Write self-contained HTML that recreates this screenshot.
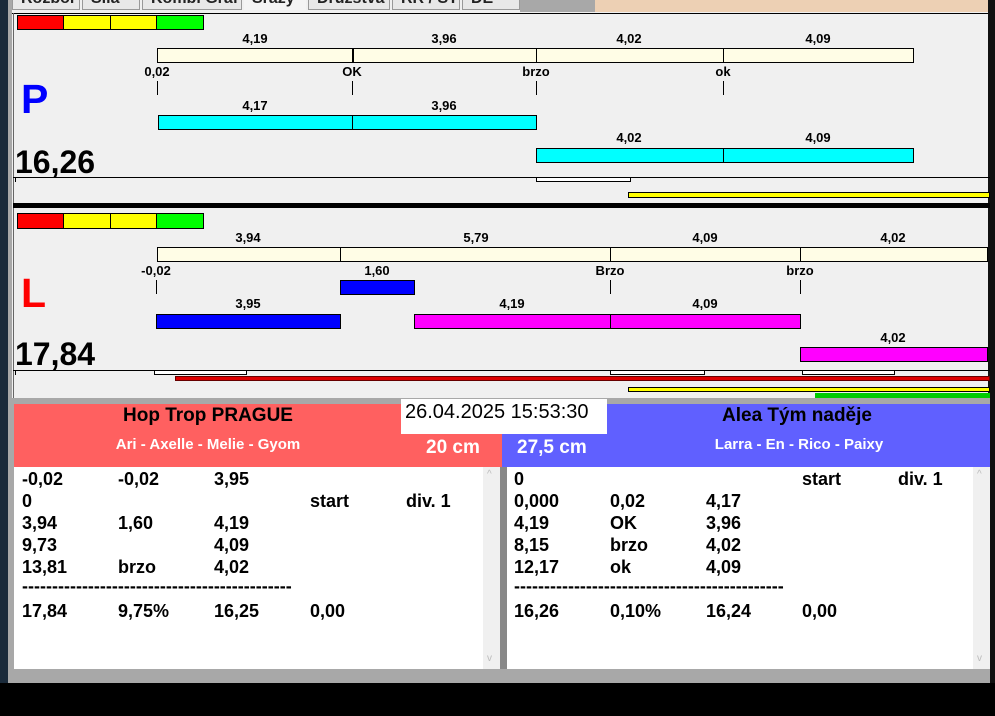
<!DOCTYPE html>
<html><head><meta charset="utf-8"><style>
*{margin:0;padding:0;box-sizing:border-box}
body{width:995px;height:716px;overflow:hidden;background:#000;position:relative;font-family:"Liberation Sans",Arial,sans-serif;font-weight:bold}
div,span{position:absolute}
.lb{font-size:13px;transform:translateX(-50%);white-space:nowrap;color:#000}
.cr{background:#fffde6;border:1px solid #000}
.tk{width:1px;background:#000}
.tab{top:-2px;height:12px;background:#e8e8e8;border:1px solid #999;border-top:none;font-size:16px;overflow:hidden}
.tab span{top:-8px;left:8px;white-space:nowrap;font-weight:bold;color:#222}
.row{font-size:18px;white-space:nowrap}
</style></head><body>
<div style="left:0;top:0;width:8px;height:683px;background:#1a2a3a"></div>
<div style="left:8px;top:0;width:4px;height:683px;background:#a8a8a8"></div>
<div style="left:12px;top:0;width:978px;height:13px;background:#f0f0f0"></div>
<div style="left:520px;top:0;width:75px;height:12px;background:#a8a8a8"></div>
<div style="left:595px;top:0;width:395px;height:12px;background:#edd0b4"></div>
<div class="tab" style="left:12px;width:68px"><span>Rozbor</span></div>
<div class="tab" style="left:82px;width:58px"><span>Síla</span></div>
<div class="tab" style="left:142px;width:100px"><span>Kombi Graf</span></div>
<div class="tab" style="left:244px;width:62px;background:#f4f4f4;border:none"><span>Sráży</span></div>
<div class="tab" style="left:308px;width:82px"><span>Družstva</span></div>
<div class="tab" style="left:392px;width:68px"><span>RR / ST</span></div>
<div class="tab" style="left:462px;width:58px"><span>DE</span></div>
<div style="left:12px;top:13px;width:978px;height:390px;background:#f0f0f0;border-top:1px solid #000"></div>
<div style="left:988px;top:0;width:7px;height:683px;background:#111"></div>
<div style="left:13px;top:13px;width:1px;height:390px;background:#666"></div>

<div style="left:17px;top:15px;width:47px;height:15px;background:#f00;border:1px solid #000"></div>
<div style="left:63px;top:15px;width:48px;height:15px;background:#ff0;border:1px solid #000"></div>
<div style="left:110px;top:15px;width:47px;height:15px;background:#ff0;border:1px solid #000"></div>
<div style="left:156px;top:15px;width:48px;height:15px;background:#0f0;border:1px solid #000"></div>

<span class="lb" style="left:255px;top:31px">4,19</span>
<span class="lb" style="left:444px;top:31px">3,96</span>
<span class="lb" style="left:629px;top:31px">4,02</span>
<span class="lb" style="left:818px;top:31px">4,09</span>
<div class="cr" style="left:157px;top:48px;width:757px;height:15px"></div>
<div class="tk" style="left:352px;top:48px;height:15px;width:2px"></div>
<div class="tk" style="left:536px;top:48px;height:15px"></div>
<div class="tk" style="left:723px;top:48px;height:15px"></div>
<span class="lb" style="left:157px;top:64px">0,02</span>
<span class="lb" style="left:352px;top:64px">OK</span>
<span class="lb" style="left:536px;top:64px">brzo</span>
<span class="lb" style="left:723px;top:64px">ok</span>
<div class="tk" style="left:157px;top:81px;height:14px"></div>
<div class="tk" style="left:352px;top:81px;height:14px"></div>
<div class="tk" style="left:536px;top:81px;height:14px"></div>
<div class="tk" style="left:723px;top:81px;height:14px"></div>
<span style="left:21px;top:76px;font-size:41px;color:#00f">P</span>

<span class="lb" style="left:255px;top:98px">4,17</span>
<span class="lb" style="left:444px;top:98px">3,96</span>
<div style="left:158px;top:115px;width:195px;height:15px;background:#0ff;border:1px solid #000"></div>
<div style="left:352px;top:115px;width:185px;height:15px;background:#0ff;border:1px solid #000"></div>
<span class="lb" style="left:629px;top:130px">4,02</span>
<span class="lb" style="left:818px;top:130px">4,09</span>
<div style="left:536px;top:148px;width:188px;height:15px;background:#0ff;border:1px solid #000"></div>
<div style="left:723px;top:148px;width:191px;height:15px;background:#0ff;border:1px solid #000"></div>
<span style="left:15px;top:144px;font-size:32px">16,26</span>
<div style="left:13px;top:177px;width:977px;height:1px;background:#000"></div>
<div class="tk" style="left:15px;top:177px;height:5px"></div>
<div style="left:536px;top:177px;width:95px;height:5px;background:#fff;border:1px solid #000"></div>
<div style="left:628px;top:192px;width:362px;height:6px;background:#ff0;border:1px solid #000"></div>
<div style="left:13px;top:203px;width:977px;height:5px;background:#000"></div>

<div style="left:17px;top:213px;width:47px;height:16px;background:#f00;border:1px solid #000"></div>
<div style="left:63px;top:213px;width:48px;height:16px;background:#ff0;border:1px solid #000"></div>
<div style="left:110px;top:213px;width:47px;height:16px;background:#ff0;border:1px solid #000"></div>
<div style="left:156px;top:213px;width:48px;height:16px;background:#0f0;border:1px solid #000"></div>

<span class="lb" style="left:248px;top:230px">3,94</span>
<span class="lb" style="left:476px;top:230px">5,79</span>
<span class="lb" style="left:705px;top:230px">4,09</span>
<span class="lb" style="left:893px;top:230px">4,02</span>
<div class="cr" style="left:157px;top:247px;width:831px;height:15px"></div>
<div class="tk" style="left:340px;top:247px;height:15px"></div>
<div class="tk" style="left:610px;top:247px;height:15px"></div>
<div class="tk" style="left:800px;top:247px;height:15px"></div>
<span class="lb" style="left:156px;top:263px">-0,02</span>
<span class="lb" style="left:377px;top:263px">1,60</span>
<span class="lb" style="left:610px;top:263px">Brzo</span>
<span class="lb" style="left:800px;top:263px">brzo</span>
<div class="tk" style="left:156px;top:280px;height:14px"></div>
<div class="tk" style="left:610px;top:280px;height:14px"></div>
<div class="tk" style="left:800px;top:280px;height:14px"></div>
<div style="left:340px;top:280px;width:75px;height:15px;background:#00f;border:1px solid #000"></div>
<span style="left:21px;top:270px;font-size:41px;color:#f00">L</span>

<span class="lb" style="left:248px;top:296px">3,95</span>
<span class="lb" style="left:512px;top:296px">4,19</span>
<span class="lb" style="left:705px;top:296px">4,09</span>
<div style="left:156px;top:314px;width:185px;height:15px;background:#00f;border:1px solid #000"></div>
<div style="left:414px;top:314px;width:197px;height:15px;background:#f0f;border:1px solid #000"></div>
<div style="left:610px;top:314px;width:191px;height:15px;background:#f0f;border:1px solid #000"></div>
<span class="lb" style="left:893px;top:330px">4,02</span>
<div style="left:800px;top:347px;width:188px;height:15px;background:#f0f;border:1px solid #000"></div>
<span style="left:15px;top:336px;font-size:32px">17,84</span>
<div style="left:13px;top:370px;width:977px;height:1px;background:#000"></div>
<div class="tk" style="left:15px;top:370px;height:5px"></div>
<div style="left:154px;top:370px;width:93px;height:5px;background:#fff;border:1px solid #000"></div>
<div style="left:610px;top:370px;width:95px;height:5px;background:#fff;border:1px solid #000"></div>
<div style="left:802px;top:370px;width:93px;height:5px;background:#fff;border:1px solid #000"></div>
<div style="left:175px;top:376px;width:815px;height:5px;background:#d00;border:1px solid #600"></div>
<div style="left:628px;top:387px;width:362px;height:5px;background:#ff0;border:1px solid #000"></div>
<div style="left:815px;top:393px;width:175px;height:5px;background:#0c0"></div>

<div style="left:12px;top:398px;width:978px;height:285px;background:#a8a8a8"></div>
<div style="left:14px;top:404px;width:488px;height:63px;background:#ff6060"></div>
<div style="left:502px;top:404px;width:488px;height:63px;background:#6060ff"></div>
<div style="left:401px;top:399px;width:206px;height:35px;background:#fff"></div>
<span style="left:405px;top:401px;font-size:20px;font-weight:normal">26.04.2025 15:53:30</span>
<span style="left:208px;top:405px;font-size:19px;transform:translateX(-50%);white-space:nowrap">Hop Trop PRAGUE</span>
<span style="left:208px;top:436px;font-size:15px;color:#fff;transform:translateX(-50%);white-space:nowrap">Ari - Axelle - Melie - Gyom</span>
<span style="left:426px;top:437px;font-size:19px;color:#fff">20 cm</span>
<span style="left:797px;top:405px;font-size:19px;transform:translateX(-50%);white-space:nowrap">Alea Tým naděje</span>
<span style="left:799px;top:436px;font-size:15px;color:#fff;transform:translateX(-50%);white-space:nowrap">Larra - En - Rico - Paixy</span>
<span style="left:517px;top:437px;font-size:19px;color:#fff">27,5 cm</span>

<div style="left:14px;top:467px;width:486px;height:202px;background:#fff"></div>
<div style="left:483px;top:467px;width:17px;height:202px;background:#f0f0f0;font-size:10px;color:#bbb;font-weight:normal"><span style="left:4px;top:2px">^</span><span style="left:4px;top:186px">v</span></div>
<div style="left:500px;top:467px;width:7px;height:202px;background:#888"></div>
<div style="left:507px;top:467px;width:483px;height:202px;background:#fff"></div>
<div style="left:973px;top:467px;width:17px;height:202px;background:#f0f0f0;font-size:10px;color:#bbb;font-weight:normal"><span style="left:4px;top:2px">^</span><span style="left:4px;top:186px">v</span></div>
<div style="left:12px;top:669px;width:978px;height:14px;background:#a8a8a8"></div>

<span class="row" style="left:22px;top:469px">-0,02</span><span class="row" style="left:118px;top:469px">-0,02</span><span class="row" style="left:214px;top:469px">3,95</span>
<span class="row" style="left:22px;top:491px">0</span><span class="row" style="left:310px;top:491px">start</span><span class="row" style="left:406px;top:491px">div. 1</span>
<span class="row" style="left:22px;top:513px">3,94</span><span class="row" style="left:118px;top:513px">1,60</span><span class="row" style="left:214px;top:513px">4,19</span>
<span class="row" style="left:22px;top:535px">9,73</span><span class="row" style="left:214px;top:535px">4,09</span>
<span class="row" style="left:22px;top:557px">13,81</span><span class="row" style="left:118px;top:557px">brzo</span><span class="row" style="left:214px;top:557px">4,02</span>
<span class="row" style="left:22px;top:576px">---------------------------------------------</span>
<span class="row" style="left:22px;top:601px">17,84</span><span class="row" style="left:118px;top:601px">9,75%</span><span class="row" style="left:214px;top:601px">16,25</span><span class="row" style="left:310px;top:601px">0,00</span>
<span class="row" style="left:514px;top:469px">0</span><span class="row" style="left:802px;top:469px">start</span><span class="row" style="left:898px;top:469px">div. 1</span>
<span class="row" style="left:514px;top:491px">0,000</span><span class="row" style="left:610px;top:491px">0,02</span><span class="row" style="left:706px;top:491px">4,17</span>
<span class="row" style="left:514px;top:513px">4,19</span><span class="row" style="left:610px;top:513px">OK</span><span class="row" style="left:706px;top:513px">3,96</span>
<span class="row" style="left:514px;top:535px">8,15</span><span class="row" style="left:610px;top:535px">brzo</span><span class="row" style="left:706px;top:535px">4,02</span>
<span class="row" style="left:514px;top:557px">12,17</span><span class="row" style="left:610px;top:557px">ok</span><span class="row" style="left:706px;top:557px">4,09</span>
<span class="row" style="left:514px;top:576px">---------------------------------------------</span>
<span class="row" style="left:514px;top:601px">16,26</span><span class="row" style="left:610px;top:601px">0,10%</span><span class="row" style="left:706px;top:601px">16,24</span><span class="row" style="left:802px;top:601px">0,00</span>
</body></html>
